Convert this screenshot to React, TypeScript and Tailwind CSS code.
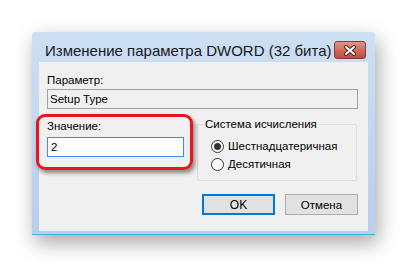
import React from "react";

function Radio({ checked, label }: { checked?: boolean; label: string }) {
  return (
    <div className="flex items-center h-[18px]">
      <span className="shrink-0 w-[13px] h-[13px] rounded-full border border-[#333333] bg-white flex items-center justify-center">
        {checked && <span className="w-[7px] h-[7px] rounded-full bg-[#333333]" />}
      </span>
      <span className="ml-[4px] text-[11.5px] leading-[16px] text-black whitespace-nowrap">{label}</span>
    </div>
  );
}

export default function App() {
  return (
    <div
      className="w-[407px] h-[268px] bg-white pt-[32px] pl-[32px] overflow-hidden"
      style={{ fontFamily: '"Liberation Sans", Arial, sans-serif' }}
    >
      <div className="w-[343px] h-[203px] flex flex-col bg-gradient-to-b from-[#cddff3] to-[#b7cfea] border-b border-[#3bb4dc] rounded-tl-[3px] rounded-tr-[3px] shadow-[3px_8px_20px_rgba(0,0,0,0.35)]">
        <div className="h-[30px] flex items-start pl-[13px] pr-[9px]">
          <span className="mt-[10px] text-[15px] leading-[18px] text-[#1a1a1a] flex-1 min-w-0 whitespace-nowrap">
            Изменение параметра DWORD (32 бита)
          </span>
          <span className="shrink-0 mt-[9px] w-[32px] h-[18px] rounded-[3px] border border-[#8a3a33] bg-gradient-to-b from-[#e0968c] via-[#d06a5e] to-[#c14a3c] flex items-center justify-center">
            <svg width="14" height="11" viewBox="0 0 14 11">
              <path d="M3 2 L11 9 M11 2 L3 9" stroke="#4a2420" strokeWidth="4" strokeLinecap="round" />
              <path d="M3 2 L11 9 M11 2 L3 9" stroke="#ffffff" strokeWidth="2" strokeLinecap="round" />
            </svg>
          </span>
        </div>
        <div className="flex-1 mx-[7px] mb-[3px] bg-[#f0f0f0] relative pl-[8px] pr-[10px] pt-[10px] text-[11.5px] leading-[16px] text-black">
          <div>Параметр:</div>
          <div className="mt-[1px] h-[20px] border border-[#a0a0a0] bg-[#f0f0f0] pl-[2px] flex items-center">
            Setup Type
          </div>
          <div className="flex items-start">
            <div className="w-[137px] mt-[9px]">
              <div>Значение:</div>
              <div className="mt-[3px] h-[20px] border border-[#3c8ee6] bg-white pl-[3px] flex items-center">2</div>
            </div>
            <fieldset className="ml-[13px] mt-[7px] w-[160px] h-[65px] border border-[#dcdcdc] rounded-[2px]">
              <legend className="ml-[5px] px-[2px] leading-[16px]">Система исчисления</legend>
              <div className="pl-[13px] pt-[5px]">
                <Radio checked label="Шестнадцатеричная" />
                <Radio label="Десятичная" />
              </div>
            </fieldset>
          </div>
          <div className="flex justify-end gap-[10px] mt-[13px]">
            <button className="w-[73px] h-[21px] border-2 border-[#0078d7] bg-[#e1e1e1] flex items-center justify-center text-[12px] leading-[16px] text-black">
              OK
            </button>
            <button className="w-[73px] h-[21px] border border-[#adadad] bg-[#e1e1e1] flex items-center justify-center text-[11.5px] leading-[16px] text-black">
              Отмена
            </button>
          </div>
          <div className="absolute left-[-3px] top-[52px] w-[157px] h-[56px] rounded-[9px] border-[3px] border-[#e8151c] shadow-[2px_3px_4px_rgba(0,0,0,0.45)]" />
        </div>
      </div>
    </div>
  );
}
